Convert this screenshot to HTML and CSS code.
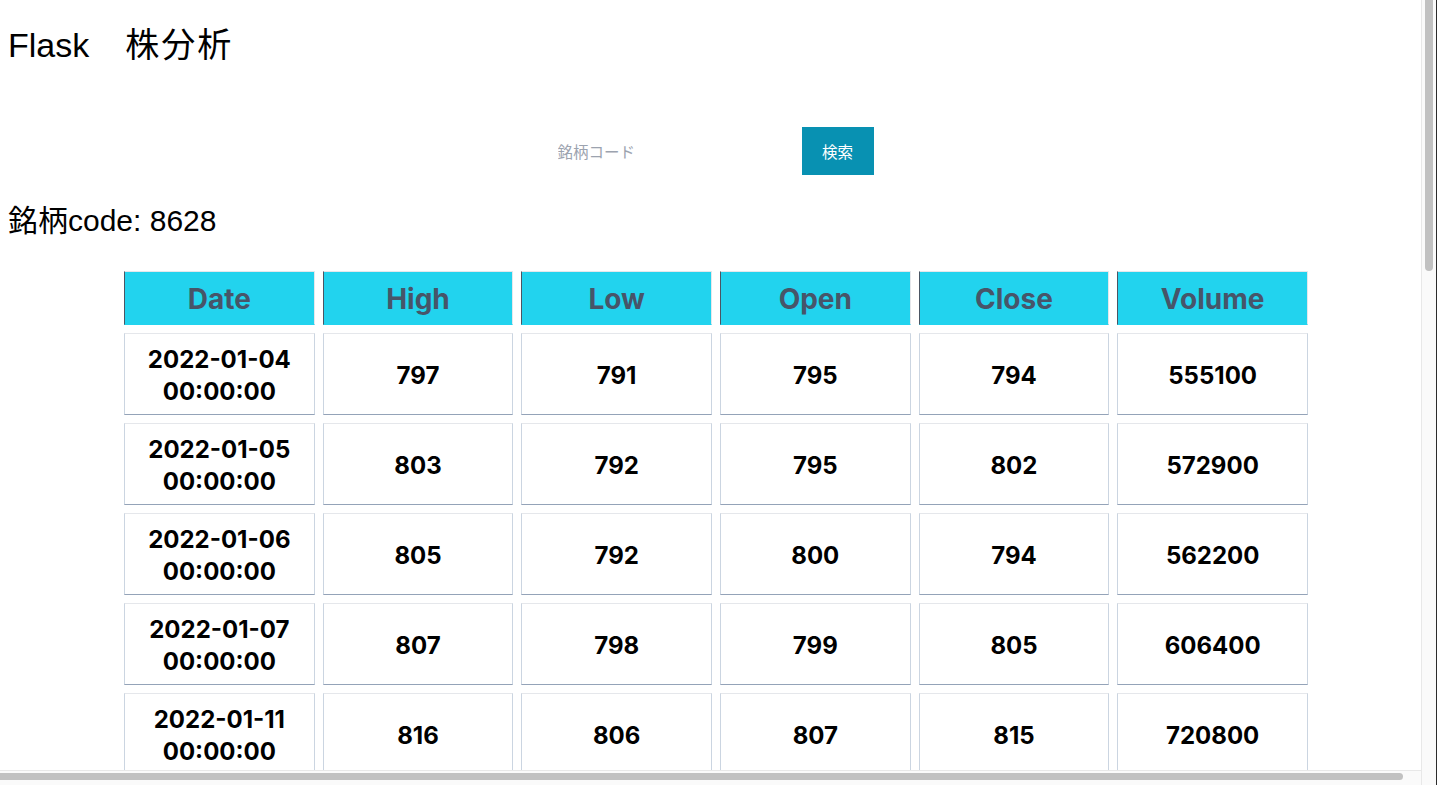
FILE: index.html
```html
<!DOCTYPE html>
<html lang="ja">
<head>
<meta charset="utf-8">
<title>Flask 株分析</title>
<link rel="stylesheet" href="styles.css">
</head>
<body>
<h1 class="title">Flask　<span class="title-ja">株分析</span></h1>
<form class="search">
  <input class="search-input" type="text" placeholder="銘柄コード">
  <button class="search-btn" type="button">検索</button>
</form>
<h2 class="code">銘柄code: 8628</h2>
<div class="table-wrap">
<table class="prices">
  <thead>
    <tr><th>Date</th><th>High</th><th>Low</th><th>Open</th><th>Close</th><th>Volume</th></tr>
  </thead>
  <tbody>
    <tr><td>2022-01-04<br>00:00:00</td><td>797</td><td>791</td><td>795</td><td>794</td><td>555100</td></tr>
    <tr><td>2022-01-05<br>00:00:00</td><td>803</td><td>792</td><td>795</td><td>802</td><td>572900</td></tr>
    <tr><td>2022-01-06<br>00:00:00</td><td>805</td><td>792</td><td>800</td><td>794</td><td>562200</td></tr>
    <tr><td>2022-01-07<br>00:00:00</td><td>807</td><td>798</td><td>799</td><td>805</td><td>606400</td></tr>
    <tr><td>2022-01-11<br>00:00:00</td><td>816</td><td>806</td><td>807</td><td>815</td><td>720800</td></tr>
    <tr><td>2022-01-12<br>00:00:00</td><td>824</td><td>812</td><td>816</td><td>821</td><td>688300</td></tr>
    <tr><td>2022-01-13<br>00:00:00</td><td>826</td><td>815</td><td>822</td><td>818</td><td>594700</td></tr>
    <tr><td>2022-01-14<br>00:00:00</td><td>817</td><td>801</td><td>815</td><td>803</td><td>701200</td></tr>
    <tr><td>2022-01-17<br>00:00:00</td><td>810</td><td>799</td><td>802</td><td>808</td><td>489600</td></tr>
    <tr><td>2022-01-18<br>00:00:00</td><td>812</td><td>797</td><td>809</td><td>799</td><td>612500</td></tr>
    <tr><td>2022-01-19<br>00:00:00</td><td>801</td><td>786</td><td>795</td><td>790</td><td>658100</td></tr>
    <tr><td>2022-01-20<br>00:00:00</td><td>796</td><td>783</td><td>788</td><td>792</td><td>540300</td></tr>
    <tr><td>2022-01-21<br>00:00:00</td><td>795</td><td>781</td><td>793</td><td>784</td><td>603900</td></tr>
    <tr><td>2022-01-24<br>00:00:00</td><td>787</td><td>770</td><td>782</td><td>774</td><td>745200</td></tr>
    <tr><td>2022-01-25<br>00:00:00</td><td>776</td><td>758</td><td>770</td><td>762</td><td>812600</td></tr>
    <tr><td>2022-01-26<br>00:00:00</td><td>771</td><td>760</td><td>764</td><td>768</td><td>598400</td></tr>
    <tr><td>2022-01-27<br>00:00:00</td><td>766</td><td>749</td><td>760</td><td>753</td><td>776900</td></tr>
    <tr><td>2022-01-28<br>00:00:00</td><td>765</td><td>752</td><td>755</td><td>763</td><td>634100</td></tr>
    <tr><td>2022-01-31<br>00:00:00</td><td>774</td><td>762</td><td>764</td><td>771</td><td>582700</td></tr>
    <tr><td>2022-02-01<br>00:00:00</td><td>783</td><td>770</td><td>772</td><td>780</td><td>617300</td></tr>
  </tbody>
</table>
</div>
<div class="scrollbar-v"><div class="scrollbar-v-thumb"></div></div>
<div class="scrollbar-h"><div class="scrollbar-h-thumb"></div></div>
<div class="scrollbar-corner"></div>
</body>
</html>
```
FILE: styles.css
```css
html {
  background: #ffffff;
}
body {
  margin: 8px;
  color: #000000;
  font-family: "Liberation Sans", "Noto Sans CJK JP", sans-serif;
}
.title {
  margin: 17px 0 0;
  font-size: 34px;
  line-height: 40px;
  font-weight: 400;
}
.title-ja {
  margin-left: 2px;
  letter-spacing: 2px;
}
.search {
  margin: 62px 0 0;
  padding-right: 18px;
  display: flex;
  justify-content: center;
}
.search-input {
  width: 256px;
  height: 48px;
  box-sizing: border-box;
  padding: 0 12px;
  border: none;
  outline: none;
  font-family: "Noto Sans CJK JP", sans-serif;
  font-size: 15.5px;
  color: #111827;
  background: #ffffff;
}
.search-input::placeholder {
  color: #9ca3af;
}
.search-btn {
  width: 72px;
  height: 48px;
  border: none;
  padding: 0;
  background: #0891b2;
  color: #ffffff;
  font-family: "Noto Sans CJK JP", sans-serif;
  font-size: 15.5px;
}
.code {
  margin: 28px 0 0;
  font-size: 30px;
  line-height: 36px;
  font-weight: 400;
}
.table-wrap {
  width: 1416px;
  margin-top: 24px;
}
.prices {
  width: 1200px;
  margin: 0 auto;
  border-collapse: separate;
  border-spacing: 8px;
  table-layout: fixed;
  font-family: "Inter", "Noto Sans", sans-serif;
  font-weight: 700;
}
.prices th {
  background: #22d3ee;
  color: #475569;
  font-size: 28px;
  line-height: 36px;
  padding: 9px 8px 7px;
  border: 1px solid;
  border-color: #e5e7eb #e5e7eb #22d3ee #4b5563;
}
.prices td {
  text-align: center;
  font-size: 24px;
  line-height: 32px;
  padding: 10px 8px 6px;
  border: 1px solid;
  border-color: #e5e7eb #cbd5e1 #94a3b8 #cbd5e1;
  color: #000000;
}
.scrollbar-v {
  position: fixed;
  top: 0;
  right: 0;
  width: 16px;
  height: 770px;
  box-sizing: border-box;
  background: #fafafa;
  border-left: 1px solid #e8e8e8;
  border-right: 1px solid #2b2b2b;
  padding: 0 3px;
}
.scrollbar-v-thumb {
  height: 271px;
  background: #c1c1c1;
  border-radius: 0 0 4px 4px;
}
.scrollbar-h {
  position: fixed;
  left: 0;
  bottom: 0;
  width: 1421px;
  height: 15px;
  box-sizing: border-box;
  background: #fafafa;
  border-top: 1px solid #e8e8e8;
  padding: 2px 0 5px;
}
.scrollbar-h-thumb {
  width: 1403px;
  height: 7px;
  background: #c1c1c1;
  border-radius: 0 4px 4px 0;
}
.scrollbar-corner {
  position: fixed;
  right: 0;
  bottom: 0;
  width: 16px;
  height: 15px;
  box-sizing: border-box;
  background: #fafafa;
  border-left: 1px solid #e8e8e8;
  border-right: 1px solid #2b2b2b;
}
```
